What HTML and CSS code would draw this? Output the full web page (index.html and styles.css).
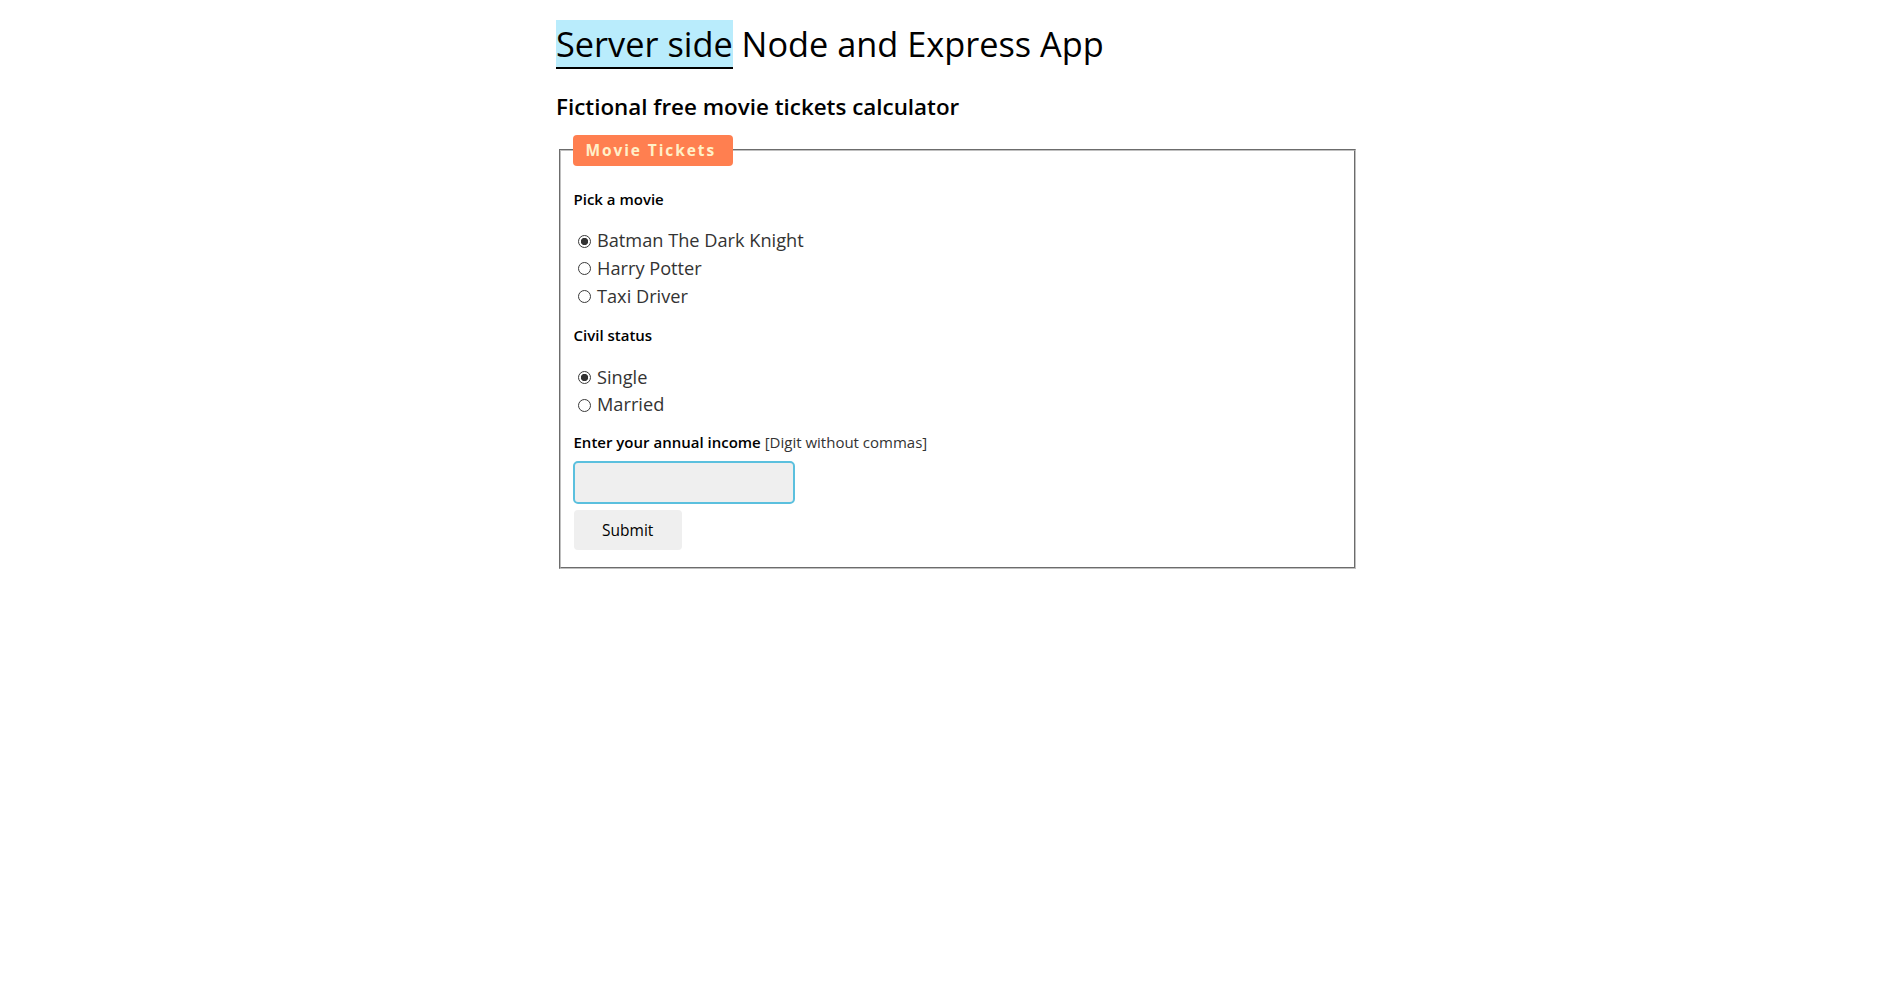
FILE: index.html
```html
<!DOCTYPE html>
<html lang="en">
<head>
<meta charset="utf-8">
<title>Server side Node and Express App</title>
<link rel="stylesheet" href="styles.css">
</head>
<body>
<div class="page">
  <h1 class="title"><mark class="hl">Server side</mark> Node and Express App</h1>
  <h2 class="subtitle">Fictional free movie tickets calculator</h2>
  <form class="form" action="#">
    <fieldset class="box">
      <legend class="legend">Movie Tickets</legend>
      <p class="label">Pick a movie</p>
      <div class="options">
        <label class="opt"><input type="radio" name="movie" checked> Batman The Dark Knight</label>
        <label class="opt"><input type="radio" name="movie"> Harry Potter</label>
        <label class="opt"><input type="radio" name="movie"> Taxi Driver</label>
      </div>
      <p class="label">Civil status</p>
      <div class="options">
        <label class="opt"><input type="radio" name="civil" checked> Single</label>
        <label class="opt"><input type="radio" name="civil"> Married</label>
      </div>
      <p class="label income"><b>Enter your annual income</b> <span class="hint">[Digit without commas]</span></p>
      <input class="field" type="text" name="income">
      <button class="submit" type="submit">Submit</button>
    </fieldset>
  </form>
</div>
</body>
</html>
```
FILE: styles.css
```css
html, body {
  margin: 0;
  padding: 0;
  background: #fff;
}
body {
  font-family: "Open Sans", "Noto Sans", sans-serif;
  color: #000;
}
.page {
  width: 800px;
  margin-left: 556px;
  padding-top: 1px;
}
.title {
  font-size: 34.3px;
  font-weight: 500;
  line-height: 48px;
  margin: 18.5px 0 0 0;
}
.hl {
  background: #b9ecfc;
  color: #000;
  border-bottom: 2px solid #000;
}
.subtitle {
  font-size: 22.4px;
  font-weight: 600;
  margin: 24px 0 0 0;
  line-height: 30px;
}
.form {
  margin: 0;
}
.box {
  margin: 13px 0 0 3px;
  padding: 8px 12px 17px 12.5px;
  border: 2px groove #c0c0c0;
}
.legend {
  background: #ff7f50;
  color: #fff0c8;
  font-weight: 700;
  font-size: 15.5px;
  letter-spacing: 1.9px;
  padding: 5px 17px 5px 13px;
  margin-left: -1px;
  border-radius: 4px;
  line-height: 21.5px;
}
.label {
  font-size: 15px;
  font-weight: 600;
  margin: 15px 0 18.2px 0;
  line-height: 20px;
}
.label b {
  font-weight: 600;
}
.hint {
  font-weight: 400;
  color: #333;
}
.options {
  display: flex;
  flex-direction: column;
}
.opt {
  display: flex;
  align-items: center;
  gap: 6px;
  font-size: 18.2px;
  font-weight: 450;
  line-height: 27.75px;
  color: #333;
}
.opt input {
  appearance: none;
  -webkit-appearance: none;
  box-sizing: border-box;
  margin: 0 0 0 4.5px;
  width: 13px;
  height: 13px;
  border: 1px solid #3a3a3a;
  border-radius: 50%;
  background: #fff;
  flex: none;
}
.opt input:checked {
  background: radial-gradient(circle, #333 0 3.4px, #fff 3.9px);
}
.income {
  margin-top: 12.8px;
  margin-bottom: 9px;
}
.field {
  display: block;
  box-sizing: border-box;
  width: 222px;
  height: 43px;
  background: #efefef;
  border: 2px solid #5bc0de;
  border-radius: 5px;
  margin: 0 0 6px -1px;
  padding: 0 8px;
  font: inherit;
}
.submit {
  display: block;
  width: 108.5px;
  height: 40px;
  background: #efefef;
  border: 0;
  border-radius: 4px;
  font-family: inherit;
  font-size: 15.5px;
  color: #000;
}
```
